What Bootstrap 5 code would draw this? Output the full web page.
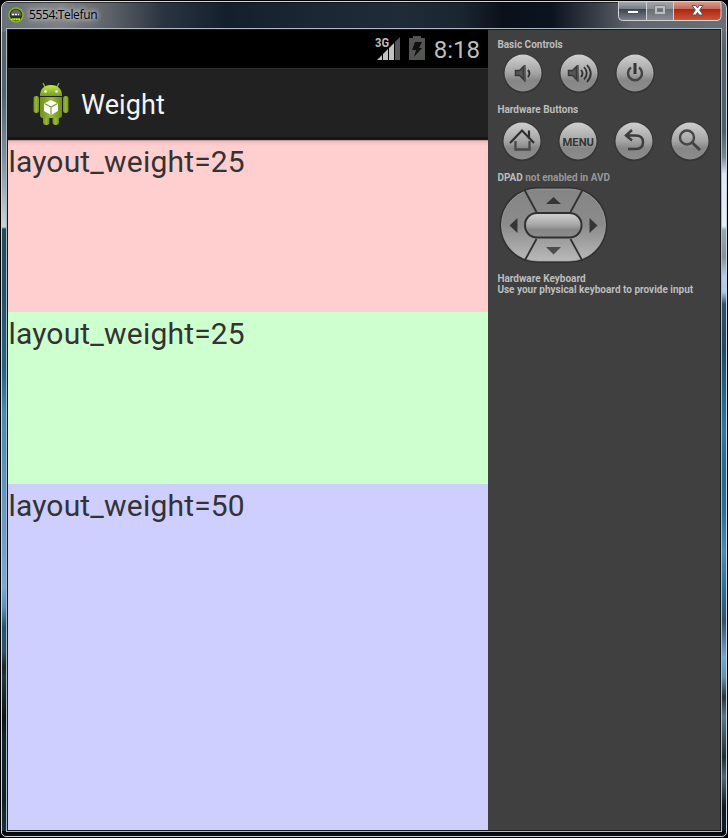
<!DOCTYPE html>
<html lang="en">
<head>
<meta charset="utf-8">
<title>5554:Telefun</title>
<link href="https://cdn.jsdelivr.net/npm/bootstrap@5.3.0/dist/css/bootstrap.min.css" rel="stylesheet">
<style>
body{background:#000;font-family:Roboto,"Noto Sans",sans-serif;width:728px;height:838px;overflow:hidden}
.win{width:726px;height:836px;margin:1px 1px 0;border:1px solid #d0d6dc;border-radius:7px 7px 5px 5px;overflow:hidden;
background:
linear-gradient(90deg,#6a7078 0,#7d8084 60px,#5b6067 110px,#2b3541 160px,#141f2b 225px,#1c2733 320px,#202b37 400px,#1a2530 460px,#0a111b 500px,#0b131f 550px,#3a4049 595px,#62656c 630px,#6b6f75 724px) 0 0/724px 30px no-repeat,
linear-gradient(#000 0,#0d1924 100%) 0 829px/724px 6px no-repeat,
linear-gradient(#5f646b 0,#54616b 90px,#87919a 160px,#cdd2d6 225px,#24495a 227px,#24506a 290px,#24658a 370px,#4789b8 410px,#6c9cc8 530px,#7ba6d4 585px,#5a91bd 605px,#23556f 625px,#2d5163 650px,#1c252b 665px,#26343d 675px,#101316 715px,#15232c 740px,#10202b 800px,#1c3340 100%) 0 0/6px 834px no-repeat,
linear-gradient(#777b80 0,#53616d 50px,#49606f 130px,#768999 155px,#d9e7fa 172px,#e6effa 224px,#97a8bb 228px,#87909b 255px,#b6cdec 275px,#accaec 290px,#30526b 302px,#1c4a68 345px,#2a7ba3 430px,#206b8f 470px,#247398 510px,#4b8cb5 550px,#246e92 590px,#305269 620px,#70aad0 655px,#5f92b5 675px,#26343e 695px,#58788d 715px,#202c34 755px,#4c6779 775px,#0d1925 805px,#101e2b 100%) 718px 0/6px 834px no-repeat,#14202b}
.title-bar{height:26px;box-shadow:inset 0 1px 0 #0008}
.app-icon{margin:5px 0 0 6px}
.caption-text{font:12px "Open Sans","Noto Sans",sans-serif;letter-spacing:-.36px;line-height:16px;margin:5px 0 0 5px;color:#000;text-shadow:0 0 4px #d5d7da,0 0 6px #c5c7ca,0 0 10px #b0b2b6}
.client{margin:0 4px 0 4px;width:716px;height:804px;border:1px solid #a9bbc5}
.client-in{height:802px;border:1px solid #16191c}
.screen{width:480px;background:#000;flex:none}
.status{height:38px}
.clock{font-size:24px;line-height:38px;color:#bebebe;letter-spacing:0;margin:1px 8px 0 9px}
.action{height:72px;background:#212121;border-top:1px solid #303030;border-bottom:3px solid #161616}
.droid{margin:1px 11px 0 24px}
.app-name{font-size:27px;line-height:66px;color:#f3f3f3;padding-top:4px;letter-spacing:.1px}
.pane{font-size:30px;line-height:36px;color:#333;padding:4px 0 0 .4px;letter-spacing:.19px}
.pane-a{height:172px;background:linear-gradient(#9d7d7d 0,#ebbcbc 1px,#f7c5c5 3px,#ffcece 6px)}
.pane-b{height:172px;background:#ceffce}
.pane-c{height:346px;background:#ceceff}
.side{background:#404040;width:232px}
.lbl{font-size:10px;font-weight:700;line-height:11px;color:#bdbdbd;margin-left:9.4px;white-space:nowrap}
.keys{gap:16px}
.dim{color:#989898;letter-spacing:-.04px}
.keys svg{display:block}
</style>
<script src="https://cdn.jsdelivr.net/npm/bootstrap@5.3.0/dist/js/bootstrap.bundle.min.js"></script>
</head>
<body>
<div class="win">
 <header class="title-bar d-flex align-items-start">
  <svg class="app-icon" width="16" height="16" viewBox="0 0 16 16"><circle cx="8" cy="8" r="7" fill="#2b302c" stroke="#84b61d" stroke-width="1.5"/><path d="M2.600 8.500a5.400 6 0 0 1 10.800 0z" fill="#666"/><path d="M3.500 11h9l-1.500 2.500h-6z" fill="#79b300"/><path d="M4 7.500h2M7 7.500h2M10 7.500h1" stroke="#fff" stroke-width="1.5"/><path d="M3 12.500h10" stroke="#cff053" stroke-width="1.500" stroke-dasharray="1.5 1"/></svg>
  <span class="caption-text">5554:Telefun</span>
  <svg class="ms-auto me-1" width="104" height="20" viewBox="0 0 104 20">
   <defs><linearGradient id="g1" x2="0" y2="1"><stop stop-color="#b1b4b9"/><stop offset=".45" stop-color="#777c85"/><stop offset=".46" stop-color="#3d4350"/><stop offset="1" stop-color="#7a808b"/></linearGradient>
   <linearGradient id="g2" x2="0" y2="1"><stop stop-color="#a5a8ac"/><stop offset=".45" stop-color="#8c9094"/><stop offset=".46" stop-color="#696d73"/><stop offset="1" stop-color="#898d92"/></linearGradient>
   <linearGradient id="g3" x2="0" y2="1"><stop stop-color="#dfa69a"/><stop offset=".45" stop-color="#c66855"/><stop offset=".46" stop-color="#ad2410"/><stop offset="1" stop-color="#cb5635"/></linearGradient></defs>
   <g transform="translate(0 -1)"><path d="M.5-1v16q0 4 4 4H29V-1z" fill="url(#g1)"/><path d="M29-1h27v20H29z" fill="url(#g2)"/><path d="M56-1h47v16q0 4-4 4H56z" fill="url(#g3)"/>
   <path d="M.5-1v16.500q0 4 4 4H99q4 0 4-4V-1M28.500 0v19M55.500 0v19" fill="none" stroke="#d2d3d6"/></g>
   <path d="M9.500 8.500h11v3h-11z" fill="#fff" stroke="#4b5260"/><path d="M38 5h8v6h-8z" fill="none" stroke="#b9bcc0" stroke-width="2"/><path d="M36.500 3.500h11v9h-11zM39.500 6.500h5v3h-5z" fill="none" stroke="#767a80" stroke-width=".7"/>
   <path d="M74 3.500h3.800L79.500 6l1.700-2.500H85L81.700 8l3.300 5h-3.800l-1.700-2.500-1.700 2.500H74l3.300-5z" fill="#fff" stroke="#53566c" stroke-width="1"/></svg>
 </header>
 <div class="client"><div class="client-in d-flex">
  <main class="screen d-flex flex-column">
   <div class="status d-flex justify-content-end align-items-start">
    <svg width="26" height="32" viewBox="0 0 26 32"><text x="0" y="16.500" font-size="12" font-weight="700" fill="#bebebe" textLength="14" lengthAdjust="spacingAndGlyphs">3G</text><path d="M2 30l5-5v5zM8 24l5-5v11H8zM14 18l5-5v17h-5z" fill="#c2c2c2"/><path d="M20 12l5-5v23h-5z" fill="#555855"/></svg>
    <svg class="ms-2" width="16" height="32" viewBox="0 0 16 32"><path d="M4 6h8v2h4v22H0V8h4z" fill="#525552"/><path d="M6 12h7l-3 6h3L5 27l2-7H3z" fill="#111"/></svg>
    <span class="clock">8:18</span>
   </div>
   <div class="action d-flex align-items-center">
    <svg class="droid" width="38" height="44" viewBox="0 0 38 44">
     <defs><linearGradient id="ag" x2="0" y2="1"><stop stop-color="#c5ec4c"/><stop offset="1" stop-color="#779a23"/></linearGradient><linearGradient id="ab"><stop stop-color="#6d9125"/><stop offset=".5" stop-color="#9cba32"/><stop offset="1" stop-color="#6b8e22"/></linearGradient></defs>
     <path d="M13 5l-2-4M25 5l2-4" stroke="#86aa35" stroke-width="1.400"/><path d="M8 14C8 7 12 3 19 3s11 4 11 11z" fill="url(#ag)"/>
     <g fill="url(#ab)"><rect x="1.500" y="14" width="5.500" height="17" rx="2.700"/><rect x="31" y="14" width="5.500" height="17" rx="2.700"/><rect x="11" y="31" width="6.500" height="12" rx="3"/><rect x="20.500" y="31" width="6.500" height="12" rx="3"/><path d="M8 15h22v18q0 3-3 3H11q-3 0-3-3z"/></g>
     <circle cx="13.500" cy="9.500" r="1.200" fill="#fff"/><circle cx="24.500" cy="9.500" r="1.200" fill="#fff"/><path d="M19 18l7 3.500v7.500l-7 4-7-4v-7.500z" fill="#fff"/><path d="M12.500 21.500L19 25l6.500-3.500M19 25v7.500" fill="none" stroke="#819b35" stroke-width="1.200"/></svg>
    <span class="app-name">Weight</span>
   </div>
   <div class="pane pane-a">layout_weight=25</div>
   <div class="pane pane-b">layout_weight=25</div>
   <div class="pane pane-c">layout_weight=50</div>
  </main>
  <aside class="side">
   <svg width="0" height="0" class="d-block"><defs><linearGradient id="kg" x2="0" y2="1"><stop stop-color="#cfcfcf"/><stop offset=".5" stop-color="#a5a5a5"/><stop offset=".7" stop-color="#868686"/><stop offset="1" stop-color="#8c8c8c"/></linearGradient><linearGradient id="dg" x2="0" y2="1"><stop stop-color="#858585"/><stop offset=".5" stop-color="#8b8b8b"/><stop offset="1" stop-color="#b8b9b8"/></linearGradient>
   <g id="key"><circle cx="20" cy="20.500" r="19.700" fill="#353535"/><circle cx="20" cy="20" r="18.500" fill="url(#kg)"/></g></defs></svg>
   <div class="lbl" style="padding-top:9px">Basic Controls</div>
   <div class="keys d-flex" style="margin:3px 0 0 15.400px">
    <svg width="40" height="41"><use href="#key"/><path d="M12.500 17.500h4l4-4v13l-4-4h-4z" fill="#555" stroke="#383838" stroke-width="1.500"/><path d="M22 12v17" stroke="#333" stroke-width="1.200"/><path d="M25 17q3 3.500 0 7" stroke="#333" stroke-width="2" fill="none"/></svg>
    <svg width="40" height="41"><use href="#key"/><path d="M9.500 17.500h4l4-4v13l-4-4h-4z" fill="#555" stroke="#383838" stroke-width="1.500"/><path d="M19 12v17" stroke="#333" stroke-width="1.200"/><path d="M22 17q3 3.500 0 7M25 14q5.500 6 0 12.500M28 12q7.500 8.500 0 17" stroke="#333" stroke-width="1.800" fill="none"/></svg>
    <svg width="40" height="41"><use href="#key"/><path d="M16 14.500a7 7 0 1 0 8 0" stroke="#444" stroke-width="2.500" fill="none"/><path d="M20 10v11" stroke="#353535" stroke-width="3"/></svg>
   </div>
   <div class="lbl" style="margin-top:10px">Hardware Buttons</div>
   <div class="keys d-flex" style="margin:6px 0 0 14.400px">
    <svg width="40" height="41"><use href="#key"/><path d="M8 22L20 9.500 32 22M27 9.500v7" stroke="#303030" stroke-width="2.200" fill="none"/><path d="M13.500 20v8.500h14v-8.500" stroke="#484848" stroke-width="2.300" fill="none"/></svg>
    <svg width="40" height="41"><use href="#key"/><text x="4.500" y="25" font-size="11.500" font-weight="700" textLength="31.500" lengthAdjust="spacingAndGlyphs" fill="#353535">MENU</text></svg>
    <svg width="40" height="41"><use href="#key"/><path d="M18 9l-6 5.500 6 5M12.500 14.500h9q7.500 0 7.500 6.700T21.500 28H14" stroke="#3d3d3d" stroke-width="2.500" fill="none"/></svg>
    <svg width="40" height="41"><use href="#key"/><circle cx="17" cy="16.500" r="7" fill="none" stroke="#474747" stroke-width="2.500"/><path d="M22 21.500l8 7.500" stroke="#424242" stroke-width="3"/></svg>
   </div>
   <div class="lbl" style="margin-top:10px">DPAD <span class="dim">not enabled in AVD</span></div>
   <svg width="110" height="79" viewBox="0 0 110 79" class="d-block" style="margin:3px 0 0 11px">
    <rect x=".5" y="1" width="108" height="76" rx="38" fill="#303030"/><rect x="2.500" y="3" width="104" height="72" rx="36" fill="url(#dg)" stroke="#aaa" stroke-width=".7"/>
    <path d="M25.500 4l12 22M83.500 4l-12 22M25.500 75l12-22M83.500 75l-12-22" stroke="#303030" stroke-width="1.800"/>
    <rect x="25" y="26" width="58.500" height="26.500" rx="13" fill="#303030"/><rect x="27" y="28" width="54.500" height="22.500" rx="11" fill="url(#kg)"/>
    <path d="M47 18l7.500-7 7.500 7zM18.500 32v15l-8-7.500zM90.500 32v15l8-7.500z" fill="#353535"/><path d="M47 61h15L54.500 68.500z" fill="#4d4d4d"/></svg>
   <div class="lbl" style="margin-top:8px">Hardware Keyboard<br>Use your physical keyboard to provide input</div>
  </aside>
 </div></div>
</div>
</body>
</html>
